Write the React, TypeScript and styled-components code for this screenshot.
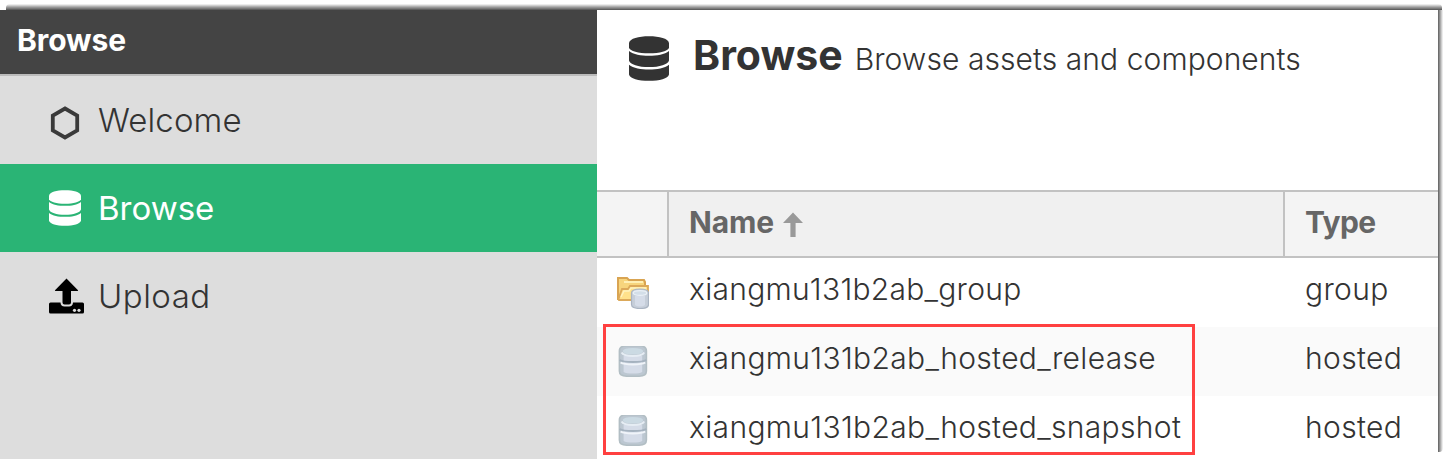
import React from "react";
import styled, { createGlobalStyle } from "styled-components";

const GlobalStyle = createGlobalStyle`
  * { box-sizing: border-box; }
  body {
    margin: 0;
    background: #fff;
    font-family: Inter, "Liberation Sans", sans-serif;
    color: #333;
    overflow: hidden;
  }
`;

const Page = styled.div`
  display: grid;
  grid-template-columns: 1438px 10px;
  grid-template-rows: 10px 449px;
  width: 1448px;
  height: 459px;
`;

const TopShadow = styled.div`
  grid-column: 1 / 3;
  margin: 4px 6px 0 6px;
  border-radius: 4px 4px 0 0;
  background: linear-gradient(#ececec 0 1px, #cfcfcf 1px 2px, #b0b0b0 2px 3px, #949494 3px 4px, #7c7c7c 4px 5px, #606060 5px 6px);
`;

const SideShadow = styled.div`
  width: 5px;
  height: 442px;
  border-radius: 0 0 4px 0;
  background: linear-gradient(to right, #6c6c6c 0 1px, #8c8c8c 1px 2px, #acacac 2px 3px, #cdcdcd 3px 4px, #ebebeb 4px 5px);
`;

const Shell = styled.div`
  display: flex;
  height: 449px;
  overflow: hidden;
`;

const Sidebar = styled.nav`
  width: 597px;
  background: #ddd;
  flex: none;
`;

const SidebarTitle = styled.div`
  display: flex;
  align-items: center;
  height: 66px;
  padding: 0 0 4px 17px;
  background: #444;
  border-bottom: 2px solid #bbb;
  color: #fff;
  font-size: 30px;
  font-weight: 700;
  letter-spacing: -0.1px;
`;

const NavItem = styled.div<{ $active?: boolean }>`
  display: flex;
  align-items: center;
  height: 88px;
  padding-left: 48px;
  background: ${(p) => (p.$active ? "#2ab475" : "transparent")};
  color: ${(p) => (p.$active ? "#fff" : "#333")};
`;

const NavIcon = styled.span<{ $inset?: number }>`
  display: flex;
  width: 50px;
  padding-left: ${(p) => p.$inset ?? 0}px;
  flex: none;
`;

const NavLabel = styled.span<{ $spacing: number; $weight: number }>`
  font-size: 33px;
  font-weight: ${(p) => p.$weight};
  letter-spacing: ${(p) => p.$spacing}px;
`;

const Main = styled.main`
  position: relative;
  flex: 1;
  background: #fff;
`;

const Heading = styled.header`
  display: flex;
  align-items: baseline;
  height: 180px;
  padding: 19px 0 0 32px;
`;

const HeadingIcon = styled.span`
  display: flex;
  align-self: flex-start;
  width: 64px;
  padding-top: 7px;
`;

const Title = styled.h1`
  margin: 0 12px 0 0;
  font-size: 41px;
  line-height: 52px;
  font-weight: 700;
  letter-spacing: 0;
`;

const Subtitle = styled.span`
  font-size: 30px;
  font-weight: 300;
  letter-spacing: 0.07px;
`;

const Row = styled.div<{ $alt?: boolean }>`
  display: grid;
  grid-template-columns: 70px 616px 1fr;
  height: 69px;
  background: ${(p) => (p.$alt ? "#fafafa" : "#fff")};
`;

const HeaderRow = styled(Row)`
  height: 68px;
  background: #f4f4f4;
  border-top: 2px solid #c2c2c2;
  border-bottom: 2px solid #c2c2c2;
`;

const HeaderCell = styled.div<{ $sorted?: boolean; $first?: boolean; $spacing?: number }>`
  display: flex;
  align-items: center;
  padding: 0 0 4px 20px;
  border-left: ${(p) => (p.$first ? "none" : "2px solid #c2c2c2")};
  background: ${(p) => (p.$sorted ? "#f0f0f0" : "transparent")};
  color: #666;
  font-size: 30px;
  font-weight: 700;
  letter-spacing: ${(p) => p.$spacing ?? 0}px;
  svg { margin: 6px 0 0 8px; }
`;

const IconCell = styled.div`
  display: flex;
  align-items: center;
  padding-left: 20px;
`;

const Cell = styled.div<{ $spacing: number }>`
  display: flex;
  align-items: center;
  padding: 0 0 7px 22px;
  font-size: 30px;
  font-weight: 300;
  letter-spacing: ${(p) => p.$spacing}px;
  white-space: nowrap;
`;

const Highlight = styled.div`
  position: absolute;
  left: 6px;
  top: 314px;
  width: 592px;
  height: 131px;
  border: 3px solid #ff4040;
`;

const DatabaseIcon = ({ width, height }: { width: number; height: number }) => (
  <svg width={width} height={height} viewBox="0 0 32 36" preserveAspectRatio="none" fill="currentColor">
    <path d="M0 5.500C0.800 2 7.500 0.200 16 0.200S31.200 2 32 5.500V9.300C31.200 12 24.500 13.800 16 13.800S0.800 12 0 9.300Z" />
    <path d="M0 11.900C3.500 14.600 9.500 15.800 16 15.800S28.500 14.600 32 11.900V19.500C31.200 22.600 24.500 24.800 16 24.800S0.800 22.600 0 19.500Z" />
    <path d="M0 22.900C3.500 25.600 9.500 26.800 16 26.800S28.500 25.600 32 22.900V30.700C31.200 33.800 24.500 35.800 16 35.800S0.800 33.800 0 30.700Z" />
  </svg>
);

const HexagonIcon = () => (
  <svg width="34" height="39" viewBox="0 -5 34 39" fill="none" stroke="#3a3a3a" strokeWidth="3.8">
    <path d="M17 2.500L29.200 9.700V24.300L17 31.500L4.800 24.300V9.700Z" />
  </svg>
);

const UploadIcon = () => (
  <svg width="36" height="36" viewBox="0 0 36 36">
    <path fill="#000" d="M18.500 0.500L30 12.200Q30.400 13 29.500 13H23V24.500Q23 26.500 21 26.500H16.500Q14.500 26.500 14.500 24.500V13H7.500Q6.600 13 7 12.200Z" />
    <path fill="#000" d="M2.500 24.500H12.500Q12.700 28.500 16.500 28.500H21Q24.800 28.500 25 24.500H34.500Q36 24.500 36 26V34Q36 35.500 34.500 35.500H2.500Q1 35.500 1 34V26Q1 24.500 2.500 24.500Z" />
    <circle cx="26.500" cy="32.300" r="1.600" fill="#ddd" />
    <circle cx="31" cy="32.300" r="1.600" fill="#ddd" />
  </svg>
);

const SortIcon = () => (
  <svg width="22" height="26" viewBox="0 0 22 26" fill="#999">
    <path d="M11 0.500L21 11H13.600V25H8.400V11H1Z" />
  </svg>
);

const RepoShape = () => (
  <>
    <path d="M0.800 6Q0.800 1 8 0.800H20.600Q27.800 1 27.800 6V26Q27.800 31 20.600 31.200H8Q0.800 31 0.800 26Z" fill="#bcc7d1" stroke="#b2bec4" strokeWidth="1.600" />
    <path d="M5 11H23.600V27Q21 28.500 14.300 28.500T5 27Z" fill="#d5dce8" />
    <path d="M4 6Q5 3 14.300 3T24.600 6Q24 9.500 14.300 9.500T4 6Z" fill="#cbdae3" />
    <path d="M3 7.500Q5 11 14.300 11T25.600 7.500" fill="none" stroke="#e6edf4" strokeWidth="2" />
    <path d="M1 15Q4 17 14.300 17T27.600 15" fill="none" stroke="#a5b2bf" strokeWidth="1.800" />
    <path d="M2 17.500Q5 19.400 14.300 19.400T26.600 17.500" fill="none" stroke="#f0f4f9" strokeWidth="2" />
  </>
);

const RepoIcon = () => (
  <svg width="32" height="32" viewBox="-1.600 1 32 32"><RepoShape /></svg>
);

const GroupIcon = () => (
  <svg width="32" height="32" viewBox="0 1 32 32">
    <path d="M1 2H10L12 4H27L28 6V23H1Z" fill="#f7d57d" stroke="#d9a452" strokeWidth="2" />
    <path d="M7 6H26" stroke="#fff0b5" strokeWidth="2" />
    <path d="M1.500 23L5 13H11L13 10H31V24H2Z" fill="#ffe18b" stroke="#dca95a" strokeWidth="1.800" />
    <path d="M4 21L7 15H12L14 12H29" fill="none" stroke="#fff2be" strokeWidth="1.500" />
    <path d="M14.500 17Q14.500 13 23 13T31.500 17V28.500Q31.500 32.500 23 32.500T14.500 28.500Z" fill="#c6ced9" stroke="#aab4c2" strokeWidth="1.200" />
    <path d="M18 20H28V29Q26 30.500 23 30.500T18 29Z" fill="#d5dce8" />
    <ellipse cx="23" cy="17" rx="6.800" ry="2.400" fill="#d3dee8" stroke="#eaf0f6" strokeWidth="1.300" />
  </svg>
);

const repositories = [
  { name: "xiangmu131b2ab_group", type: "group", nameSpacing: 0.27, typeSpacing: 0.35 },
  { name: "xiangmu131b2ab_hosted_release", type: "hosted", nameSpacing: 0.33, typeSpacing: 0.35 },
  { name: "xiangmu131b2ab_hosted_snapshot", type: "hosted", nameSpacing: 0.33, typeSpacing: 0.35 },
];

export default function App() {
  return (
    <>
      <GlobalStyle />
      <Page>
        <TopShadow />
        <Shell>
          <Sidebar>
            <SidebarTitle>Browse</SidebarTitle>
            <NavItem>
              <NavIcon><HexagonIcon /></NavIcon>
              <NavLabel $weight={300} $spacing={0.1}>Welcome</NavLabel>
            </NavItem>
            <NavItem $active>
              <NavIcon $inset={1}><DatabaseIcon width={32} height={36} /></NavIcon>
              <NavLabel $weight={400} $spacing={0}>Browse</NavLabel>
            </NavItem>
            <NavItem>
              <NavIcon><UploadIcon /></NavIcon>
              <NavLabel $weight={300} $spacing={0.5}>Upload</NavLabel>
            </NavItem>
          </Sidebar>
          <Main>
            <Heading>
              <HeadingIcon><DatabaseIcon width={40} height={45} /></HeadingIcon>
              <Title>Browse</Title>
              <Subtitle>Browse assets and components</Subtitle>
            </Heading>
            <HeaderRow>
              <HeaderCell $first />
              <HeaderCell $sorted $spacing={-0.1}>Name<SortIcon /></HeaderCell>
              <HeaderCell $spacing={-0.6}>Type</HeaderCell>
            </HeaderRow>
            {repositories.map((repo, i) => (
              <Row key={repo.name} $alt={i % 2 === 1}>
                <IconCell>{repo.type === "group" ? <GroupIcon /> : <RepoIcon />}</IconCell>
                <Cell $spacing={repo.nameSpacing}>{repo.name}</Cell>
                <Cell $spacing={repo.typeSpacing}>{repo.type}</Cell>
              </Row>
            ))}
            <Highlight />
          </Main>
        </Shell>
        <SideShadow />
      </Page>
    </>
  );
}
